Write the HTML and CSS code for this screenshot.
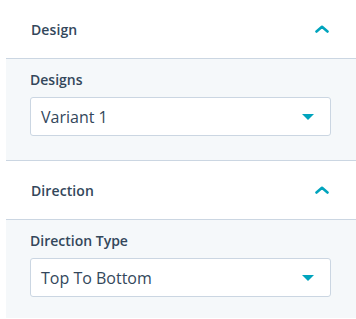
FILE: index.html
```html
<!DOCTYPE html>
<html>
<head>
<meta charset="utf-8">
<link rel="stylesheet" href="styles.css">
</head>
<body>
<div class="panel">
  <section class="section">
    <div class="header">
      <span class="title">Design</span>
      <svg class="chev" width="14" height="8" viewBox="0 0 14 8"><path d="M1.5 6.5 L7 1.8 L12.5 6.5" fill="none" stroke="#00a4bd" stroke-width="2.6" stroke-linecap="round" stroke-linejoin="round"/></svg>
    </div>
    <div class="body">
      <div class="label">Designs</div>
      <div class="select">
        <span class="value">Variant 1</span>
        <svg class="caret" width="12" height="6" viewBox="0 0 12 6"><path d="M0 0 H12 L6 6 Z" fill="#00a4bd"/></svg>
      </div>
    </div>
  </section>
  <section class="section">
    <div class="header">
      <span class="title">Direction</span>
      <svg class="chev" width="14" height="8" viewBox="0 0 14 8"><path d="M1.5 6.5 L7 1.8 L12.5 6.5" fill="none" stroke="#00a4bd" stroke-width="2.6" stroke-linecap="round" stroke-linejoin="round"/></svg>
    </div>
    <div class="body last">
      <div class="label">Direction Type</div>
      <div class="select">
        <span class="value">Top To Bottom</span>
        <svg class="caret" width="12" height="6" viewBox="0 0 12 6"><path d="M0 0 H12 L6 6 Z" fill="#00a4bd"/></svg>
      </div>
    </div>
  </section>
</div>
</body>
</html>
```

FILE: styles.css
```css
html, body {
  margin: 0;
  padding: 0;
  background: #ffffff;
}
body {
  font-family: "Open Sans", "Noto Sans", sans-serif;
  color: #33475b;
  height: 319px;
  overflow: hidden;
}
.panel {
  margin-left: 6px;
  display: flex;
  flex-direction: column;
}
.header {
  height: 59px;
  box-sizing: border-box;
  border-bottom: 1px solid #cbd6e2;
  display: flex;
  align-items: center;
  justify-content: space-between;
  padding: 0 27px 0 25px;
  background: #ffffff;
}
.title {
  font-size: 14px;
  font-weight: 600;
  letter-spacing: 0.1px;
}
.chev {
  display: block;
  margin-top: -1px;
}
.body {
  background: #f5f8fa;
  padding: 11px 25px 24px 24px;
  border-bottom: 1px solid #cbd6e2;
}
.body.last {
  border-bottom: 0;
  padding-bottom: 21px;
}
.label {
  font-size: 14px;
  font-weight: 600;
  line-height: 20px;
  margin-bottom: 7px;
}
.select {
  height: 39px;
  box-sizing: border-box;
  border: 1px solid #cbd6e2;
  border-radius: 3px;
  background: #ffffff;
  display: flex;
  align-items: center;
  justify-content: space-between;
  padding: 0 16px 0 10px;
}
.value {
  font-size: 16px;
}
.caret {
  display: block;
}
```
